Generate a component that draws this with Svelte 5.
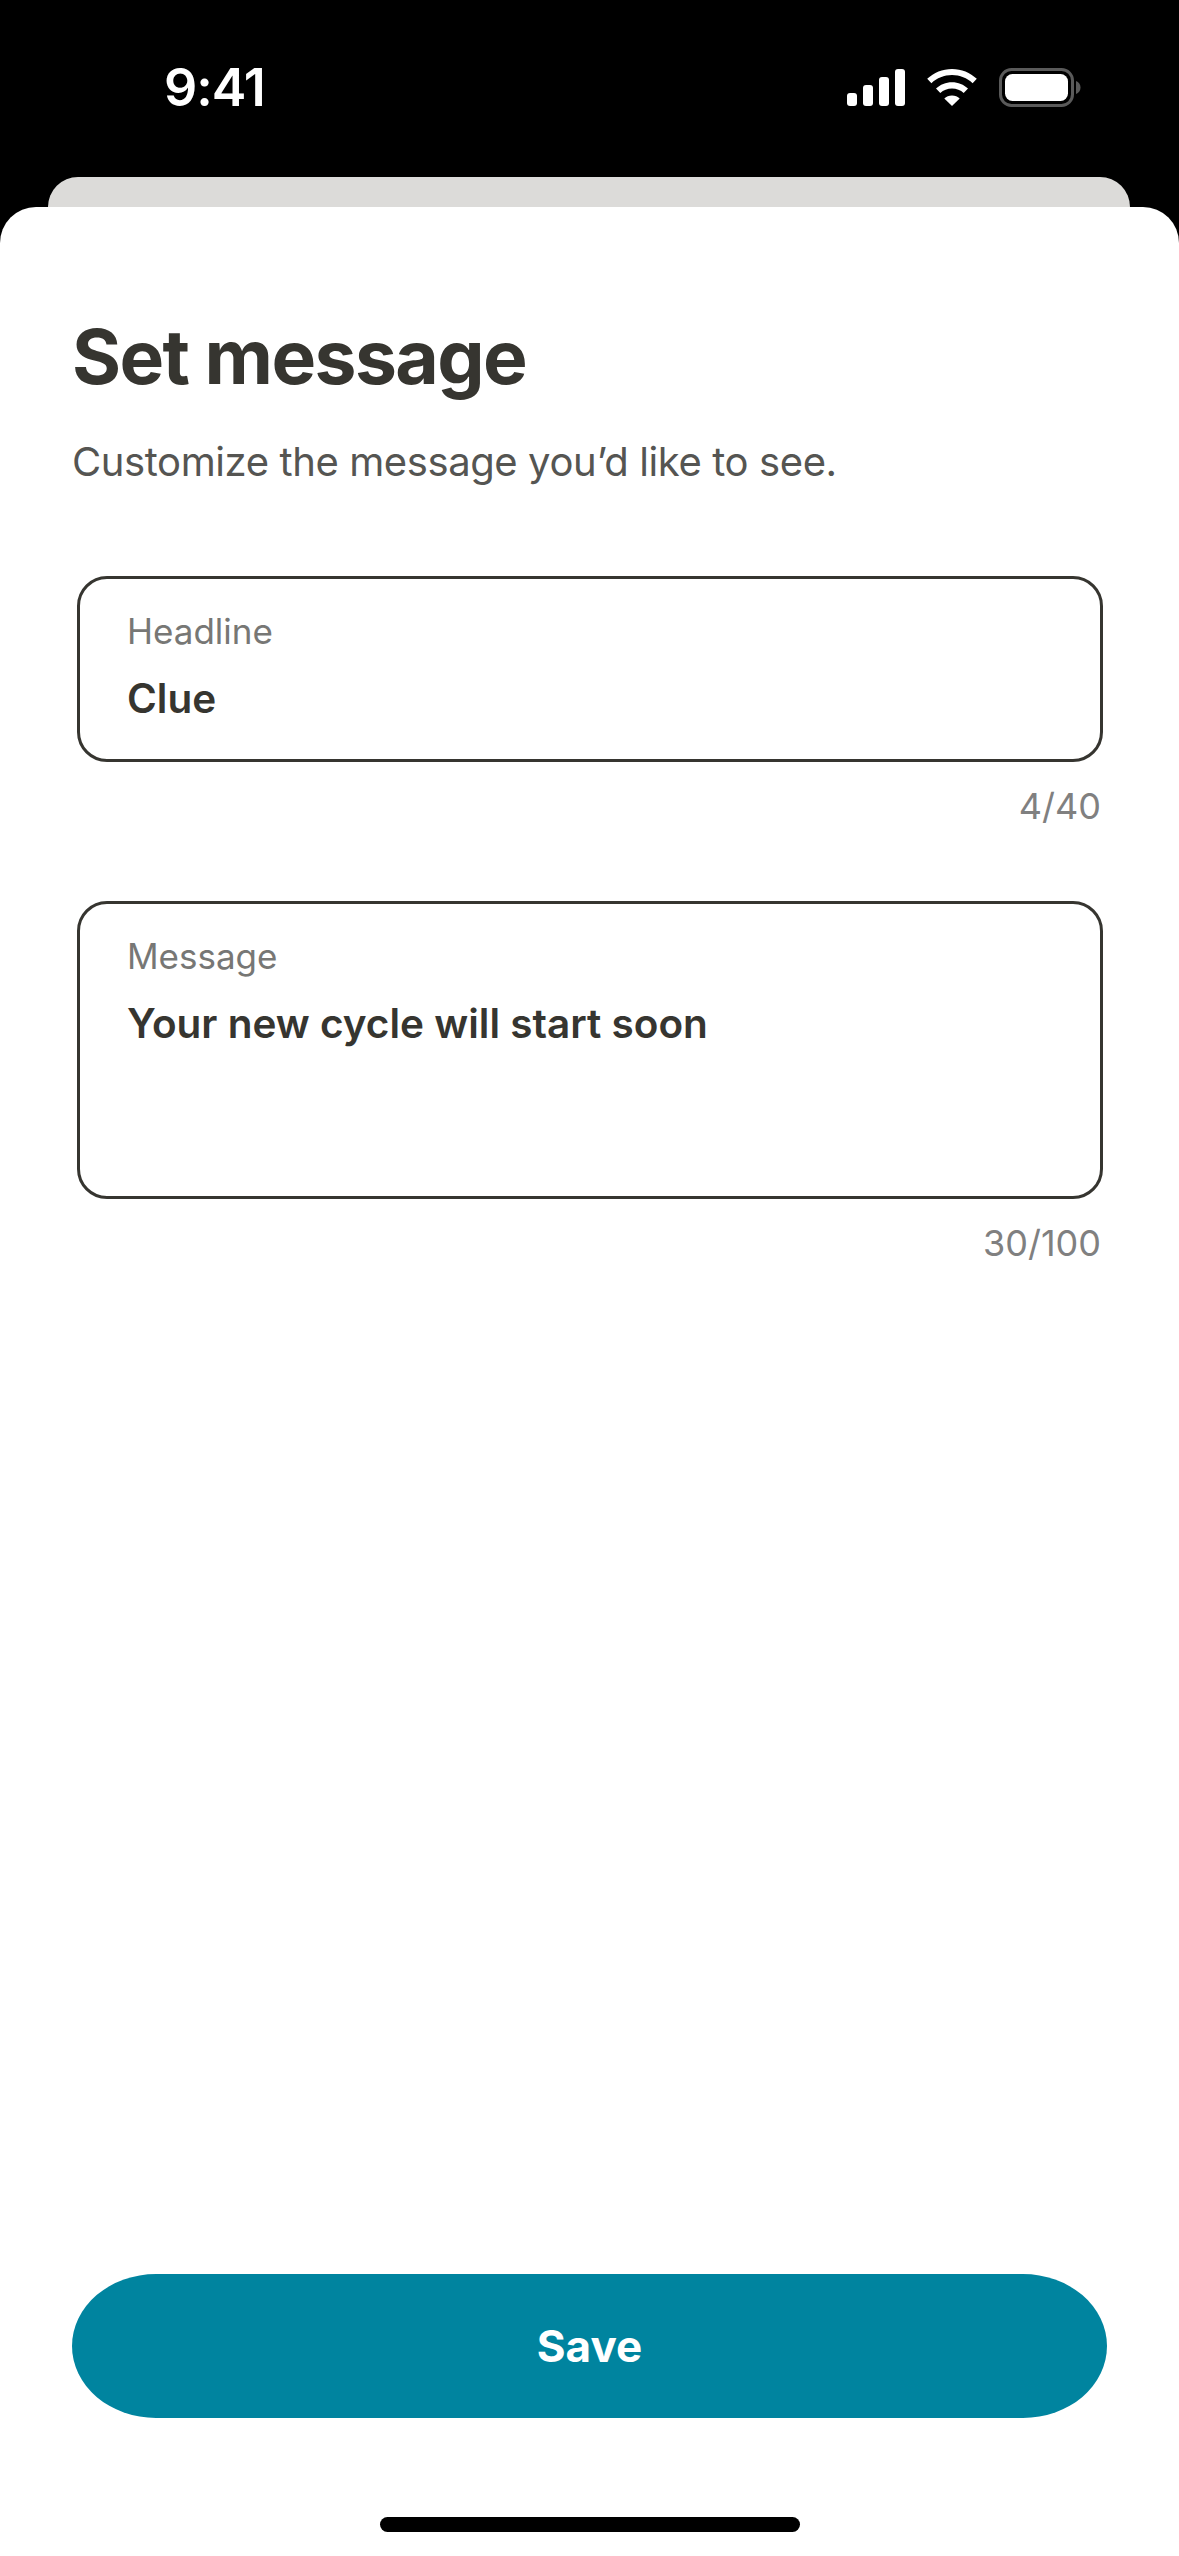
<script>
    let headline = 'Clue';
    let message = 'Your new cycle will start soon';
</script>

<div class="screen">
    <div class="status-bar">
        <span class="time">9:41</span>
        <div class="status-icons">
            <svg class="signal" width="58" height="37" viewBox="0 0 58 37" fill="#fff">
                <rect x="0" y="24" width="10" height="13" rx="3" />
                <rect x="16" y="16" width="10" height="21" rx="3" />
                <rect x="32" y="8" width="10" height="29" rx="3" />
                <rect x="48" y="0" width="10" height="37" rx="3" />
            </svg>
            <svg class="wifi" width="50" height="37" viewBox="0 0 50 37" fill="#fff">
                <path d="M25 0C34.500 0 43.200 3.700 49.800 9.800L45.600 14.200C40.100 9.200 32.900 6.100 25 6.100C17.100 6.100 9.900 9.200 4.400 14.200L0.200 9.800C6.800 3.700 15.500 0 25 0Z" />
                <path d="M25 13.300C31.200 13.300 36.800 15.700 41 19.600L36.700 24C33.600 21.200 29.500 19.500 25 19.500C20.500 19.500 16.400 21.200 13.300 24L9 19.600C13.200 15.700 18.800 13.300 25 13.300Z" />
                <path d="M25 26.500C28 26.500 30.700 27.600 32.700 29.400L25 37L17.300 29.400C19.300 27.600 22 26.500 25 26.500Z" />
            </svg>
            <svg class="battery" width="82" height="39" viewBox="0 0 82 39" fill="none">
                <rect x="1.500" y="1.500" width="72" height="36" rx="11" stroke="#5a5a5a" stroke-width="3" />
                <rect x="6" y="6" width="63" height="27" rx="7.500" fill="#fff" />
                <path d="M77 13C79.800 14 81.500 16.500 81.500 19.500C81.500 22.500 79.800 25 77 26Z" fill="#5a5a5a" />
            </svg>
        </div>
    </div>

    <div class="peek"></div>

    <main class="sheet">
        <h1>Set message</h1>
        <p class="subtitle">Customize the message you’d like to see.</p>

        <div class="field">
            <div class="box">
                <span class="label">Headline</span>
                <span class="value">{headline}</span>
            </div>
            <span class="count">{headline.length}/40</span>
        </div>

        <div class="field">
            <div class="box tall">
                <span class="label">Message</span>
                <span class="value">{message}</span>
            </div>
            <span class="count">{message.length}/100</span>
        </div>

        <button class="save">Save</button>
        <div class="home-bar"></div>
    </main>
</div>

<style>
    :global(body) {
        margin: 0;
        background: #000;
    }

    .screen {
        display: flex;
        flex-direction: column;
        min-height: 100vh;
        background: #000;
        font-family: Inter, "Noto Sans", sans-serif;
    }

    .status-bar {
        display: flex;
        justify-content: space-between;
        align-items: flex-start;
        height: 177px;
        box-sizing: border-box;
        padding: 68px 98px 0 164px;
    }

    .time {
        color: #fff;
        font-size: 52px;
        font-weight: 600;
        line-height: 40px;
        letter-spacing: -1px;
    }

    .status-icons {
        display: flex;
        align-items: center;
        gap: 22px;
    }

    .peek {
        height: 30px;
        margin: 0 49px 0 48px;
        background: #dcdbd9;
        border-radius: 30px 30px 0 0;
    }

    .sheet {
        flex: 1;
        display: flex;
        flex-direction: column;
        background: #fff;
        border-radius: 36px 36px 0 0;
        padding: 0 72px;
    }

    h1 {
        margin: 104px 0 0;
        font-size: 75px;
        font-weight: 700;
        line-height: 92px;
        letter-spacing: -1.6px;
        color: #363530;
    }

    .subtitle {
        margin: 35px 0 0;
        font-size: 40px;
        line-height: 48px;
        letter-spacing: -0.4px;
        color: #555552;
    }

    .field {
        display: flex;
        flex-direction: column;
        margin: 0 4px 0 5px;
    }

    .subtitle + .field {
        margin-top: 90px;
    }

    .field + .field {
        margin-top: 74px;
    }

    .box {
        display: flex;
        flex-direction: column;
        height: 186px;
        box-sizing: border-box;
        padding: 31px 47px 0;
        border: 3px solid #363530;
        border-radius: 30px;
    }

    .box.tall {
        height: 298px;
    }

    .label {
        font-size: 35px;
        line-height: 42px;
        color: #777775;
    }

    .value {
        margin-top: 23px;
        font-size: 40.500px;
        font-weight: 600;
        line-height: 48px;
        color: #363530;
    }

    .count {
        align-self: flex-end;
        margin: 23px 2px 0 0;
        font-size: 36px;
        line-height: 42px;
        color: #808080;
    }

    .save {
        align-self: center;
        width: 1035px;
        height: 144px;
        margin-top: auto;
        border: none;
        border-radius: 84px / 72px;
        background: #00849f;
        color: #fff;
        font-family: inherit;
        font-size: 44px;
        font-weight: 700;
    }

    .home-bar {
        align-self: center;
        width: 420px;
        height: 15px;
        margin: 99px 0 24px;
        background: #000;
        border-radius: 8px;
    }
</style>
